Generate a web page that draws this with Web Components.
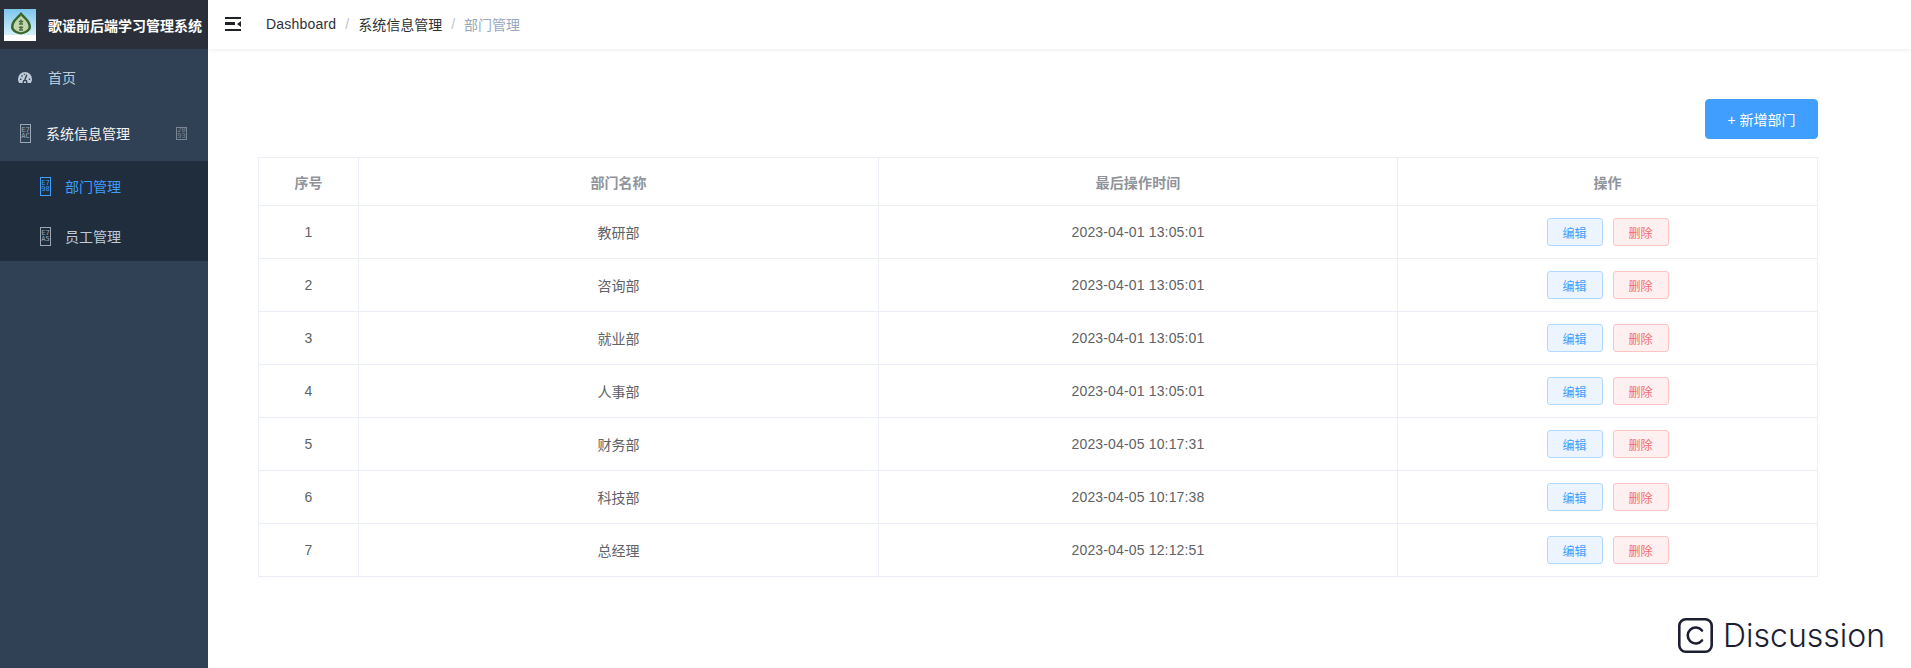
<!DOCTYPE html>
<html lang="zh">
<head>
<meta charset="utf-8">
<title>部门管理</title>
<style>
  html, body { margin: 0; height: 100%; }
  body {
    font-family: "Liberation Sans", "Noto Sans CJK SC", sans-serif;
    overflow: hidden;
  }
  #app { display: flex; height: 668px; position: relative; }
  #main { flex: 1; min-width: 0; display: flex; flex-direction: column; }
</style>
</head>
<body>
<div id="app">
  <side-bar></side-bar>
  <div id="main">
    <top-bar></top-bar>
    <dept-page></dept-page>
  </div>
  <discussion-mark></discussion-mark>
</div>

<script>
// Missing icon-font glyph: a thin box holding the hex code on two lines
class HexBox extends HTMLElement {
  constructor() {
    super();
    this.attachShadow({ mode: "open" });
  }
  connectedCallback() {
    const code = this.getAttribute("code") || "";
    this.shadowRoot.innerHTML = `
      <style>
        :host {
          display: inline-flex;
          flex: none;
          flex-direction: column;
          align-items: center;
          justify-content: center;
          box-sizing: border-box;
          width: 11px;
          height: 19px;
          border: 1px solid currentColor;
          font: 7px/6px "DejaVu Sans Mono", monospace;
        }
        :host([short]) { height: 13px; }
        span { display: block; }
      </style>
      <span>${code.slice(0, 2)}</span><span>${code.slice(2)}</span>`;
  }
}

// One row of the side menu
class SideItem extends HTMLElement {
  constructor() {
    super();
    this.attachShadow({ mode: "open" });
    this.shadowRoot.innerHTML = `
      <style>
        :host {
          display: flex;
          align-items: center;
          height: 56px;
          box-sizing: border-box;
          font-size: 14px;
          color: #bfcbd9;
          background: #304156;
        }
        :host([sub]) { height: 50px; padding-left: 40px; background: #1f2d3d; }
        :host([active]) { color: #409eff; }
        :host([open]) { color: #f4f4f5; padding-right: 21px; }
        .label { flex: 1; }
      </style>
      <slot name="icon"></slot>
      <span class="label"><slot></slot></span>
      <slot name="arrow"></slot>`;
  }
}

class SideBar extends HTMLElement {
  constructor() {
    super();
    this.attachShadow({ mode: "open" });
    this.shadowRoot.innerHTML = `
      <style>
        :host {
          display: block;
          flex: none;
          width: 208px;
          background: #304156;
        }
        .logo {
          display: flex;
          align-items: center;
          height: 49px;
          padding-left: 4px;
          background: #2b2f3a;
          color: #fff;
          font-size: 14px;
          font-weight: 600;
          white-space: nowrap;
        }
        .logo svg { margin-right: 12px; flex: none; }
        .dash { margin: 0 16px 0 18px; flex: none; }
        .tofu { margin: 0 15px 0 20px; color: #9aa6b5; }
        .tofu-sub { margin-right: 14px; }
        .arrow { color: #7a8492; }
      </style>
      <div class="logo">
        <svg width="32" height="32" viewBox="0 0 32 32">
          <defs>
            <linearGradient id="sky" x1="0" y1="0" x2="0" y2="1">
              <stop offset="0" stop-color="#7cc6ec"/>
              <stop offset="1" stop-color="#d6effa"/>
            </linearGradient>
          </defs>
          <rect width="32" height="32" fill="#fff"/>
          <rect width="32" height="26" fill="url(#sky)"/>
          <path d="M17 3C14 7 7 11 7 18c0 4 4 6.500 10 7.500C22 24.500 27 22 27 18 27 11 20 7 17 3Z" fill="#39662c"/>
          <path d="M17 6.500C15 9.500 9.500 12.500 9.500 18c0 2.500 3.500 4.500 7.500 5.200 4-.7 7.500-2.700 7.500-5.200C24.500 12.500 19 9.500 17 6.500Z" fill="#c3d6b0"/>
          <path d="M14.800 12.500h4.400M17 10.500v5M15 15l4 0" stroke="#4a6e3a" stroke-width="1.400" fill="none"/>
          <path d="M14.800 18.500h4.400M17 17v4.500M15 21l4 0" stroke="#4a6e3a" stroke-width="1.400" fill="none"/>
        </svg>
        歌谣前后端学习管理系统
      </div>
      <side-item>
        <svg class="dash" slot="icon" width="14" height="11" viewBox="0 0 14 11">
          <path fill="#bfcbd9" d="M7 0a7 7 0 0 0-7 7c0 1.500.4 2.900 1.200 4h11.600c.8-1.100 1.200-2.500 1.200-4a7 7 0 0 0-7-7Z"/>
          <path stroke="#304156" stroke-width="1.400" fill="none" d="M6.800 8 8.800 2.800M2 7.200h1.400M10.800 7.200h1.400M3.500 3.500l1 1M6.500 1.800v1M5 11l.8-2.400h2.600L9 11"/>
        </svg>
        首页
      </side-item>
      <side-item open>
        <hex-box class="tofu" slot="icon" code="E7AC"></hex-box>
        系统信息管理
        <hex-box class="arrow" slot="arrow" short code="2093"></hex-box>
      </side-item>
      <side-item sub active>
        <hex-box class="tofu-sub" slot="icon" code="E798"></hex-box>
        部门管理
      </side-item>
      <side-item sub>
        <hex-box class="tofu-sub" slot="icon" code="E7A5" style="color:#9aa6b5"></hex-box>
        员工管理
      </side-item>`;
  }
}

class TopBar extends HTMLElement {
  constructor() {
    super();
    this.attachShadow({ mode: "open" });
    this.shadowRoot.innerHTML = `
      <style>
        :host {
          display: flex;
          align-items: center;
          position: relative;
          box-sizing: border-box;
          height: 49px;
          padding-bottom: 2px;
          flex: none;
          background: #fff;
          box-shadow: 0 1px 4px rgba(0, 21, 41, .08);
          font-size: 14px;
          color: #303133;
        }
        svg { margin: 0 25px 0 17px; flex: none; }
        .sep { margin: 0 9px; color: #c0c4cc; }
        .last { color: #97a8be; }
        .en { letter-spacing: .2px; }
      </style>
      <svg width="16" height="14" viewBox="0 0 16 14">
        <path fill="#1f2329" d="M0 0h16v2H0ZM0 12h16v2H0ZM0 5h10v3H0ZM16 4v6l-4-3Z"/>
      </svg>
      <span class="en">Dashboard</span><span class="sep">/</span>
      <span>系统信息管理</span><span class="sep">/</span>
      <span class="last">部门管理</span>`;
  }
}

class ElButton extends HTMLElement {
  constructor() {
    super();
    this.attachShadow({ mode: "open" });
    this.shadowRoot.innerHTML = `
      <style>
        :host {
          display: inline-flex;
          align-items: center;
          justify-content: center;
          box-sizing: border-box;
          width: 56px;
          height: 28px;
          border-radius: 3px;
          font-size: 12px;
          border: 1px solid #b3d8ff;
          background: #ecf5ff;
          color: #409eff;
        }
        :host([kind="danger"]) { border-color: #fbc4c4; background: #fef0f0; color: #f56c6c; }
        :host([kind="primary"]) {
          width: 113px;
          height: 40px;
          font-size: 14px;
          border-radius: 4px;
          border-color: #409eff;
          background: #409eff;
          color: #fff;
        }
      </style>
      <slot></slot>`;
  }
}

const DEPT_COLUMNS = "100px 520px 519px 1fr";

class DeptRow extends HTMLElement {
  constructor() {
    super();
    this.attachShadow({ mode: "open" });
  }
  connectedCallback() {
    const head = this.hasAttribute("head");
    const cols = this.getAttribute("cols").split("|");
    const last = head
      ? `<div class="cell">${cols[3]}</div>`
      : `<div class="cell ops"><el-button>编辑</el-button><el-button kind="danger">删除</el-button></div>`;
    this.shadowRoot.innerHTML = `
      <style>
        :host {
          display: grid;
          grid-template-columns: ${DEPT_COLUMNS};
          height: 53px;
          box-sizing: border-box;
          border-bottom: 1px solid #ebeef5;
          font-size: 14px;
          color: #606266;
        }
        :host([head]) { height: 48px; color: #909399; font-weight: 700; }
        .cell {
          display: flex;
          align-items: center;
          justify-content: center;
          border-right: 1px solid #ebeef5;
        }
        .cell:last-child { border-right: 0; }
        .date { letter-spacing: .15px; }
        .ops { gap: 10px; }
      </style>
      <div class="cell">${cols[0]}</div>
      <div class="cell">${cols[1]}</div>
      <div class="cell date">${cols[2]}</div>
      ${last}`;
  }
}

const DEPTS = [
  ["1", "教研部", "2023-04-01 13:05:01"],
  ["2", "咨询部", "2023-04-01 13:05:01"],
  ["3", "就业部", "2023-04-01 13:05:01"],
  ["4", "人事部", "2023-04-01 13:05:01"],
  ["5", "财务部", "2023-04-05 10:17:31"],
  ["6", "科技部", "2023-04-05 10:17:38"],
  ["7", "总经理", "2023-04-05 12:12:51"],
];

class DeptPage extends HTMLElement {
  constructor() {
    super();
    this.attachShadow({ mode: "open" });
  }
  connectedCallback() {
    const rows = DEPTS.map((d) => `<dept-row cols="${d.join("|")}"></dept-row>`).join("");
    this.shadowRoot.innerHTML = `
      <style>
        :host { display: block; flex: 1; padding: 50px 0 0 50px; background: #fff; }
        .wrap { width: 1560px; }
        .tools { display: flex; justify-content: flex-end; margin-bottom: 18px; }
        .table { border: 1px solid #ebeef5; border-bottom: 0; box-sizing: border-box; }
      </style>
      <div class="wrap">
        <div class="tools"><el-button kind="primary">+ 新增部门</el-button></div>
        <div class="table">
          <dept-row head cols="序号|部门名称|最后操作时间|操作"></dept-row>
          ${rows}
        </div>
      </div>`;
  }
}

// Watermark over the bottom right corner of the page
class DiscussionMark extends HTMLElement {
  constructor() {
    super();
    this.attachShadow({ mode: "open" });
    this.shadowRoot.innerHTML = `
      <style>
        :host {
          position: absolute;
          left: 1678px;
          top: 618px;
          display: flex;
          align-items: center;
          gap: 10px;
          height: 35px;
          color: #1c1f33;
          font: 300 32px/35px Inter, sans-serif;
        }
        svg { flex: none; }
      </style>
      <svg width="35" height="35" viewBox="0 0 35 35" fill="none" stroke="#1c1f33" stroke-width="2.600">
        <rect x="1.300" y="1.300" width="32.400" height="32.400" rx="6.500"/>
        <path stroke-linecap="round" d="M24 12.500a8 8 0 1 0 0 10"/>
      </svg>
      <span>Discussion</span>`;
  }
}

customElements.define("hex-box", HexBox);
customElements.define("side-item", SideItem);
customElements.define("side-bar", SideBar);
customElements.define("top-bar", TopBar);
customElements.define("el-button", ElButton);
customElements.define("dept-row", DeptRow);
customElements.define("dept-page", DeptPage);
customElements.define("discussion-mark", DiscussionMark);
</script>
</body>
</html>
